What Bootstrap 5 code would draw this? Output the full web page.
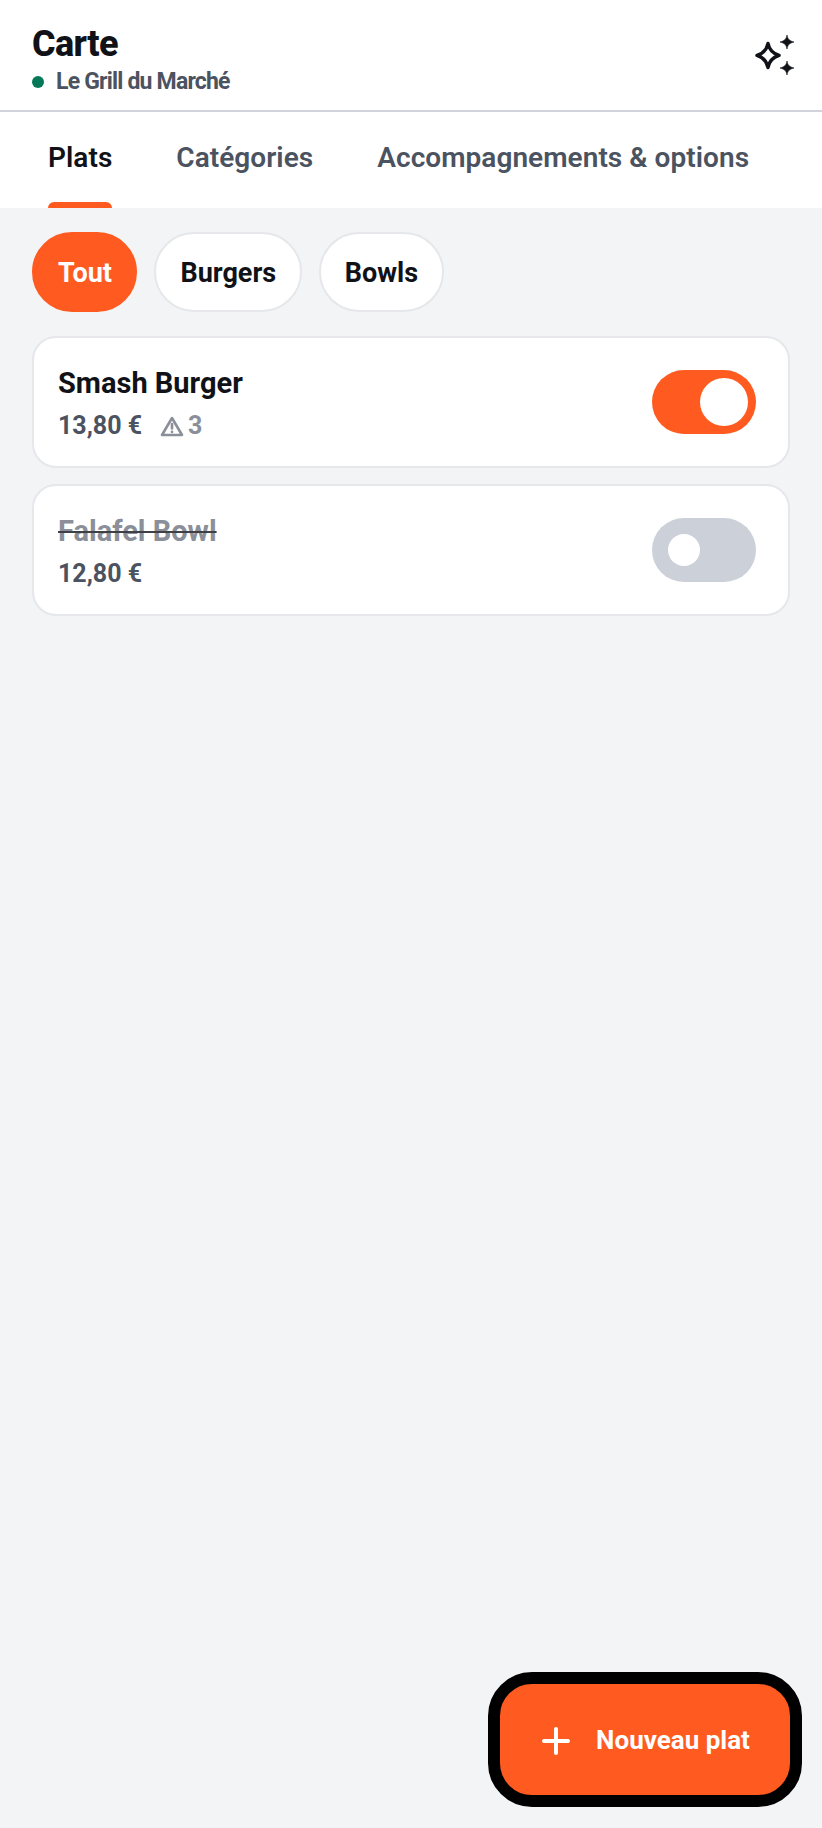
<!DOCTYPE html>
<html lang="fr">
<head>
  <meta charset="UTF-8" />
  <meta name="viewport" content="width=device-width, initial-scale=1.0"/>
  <title>Carte</title>
  <link href="https://cdn.jsdelivr.net/npm/bootstrap@5.3.0/dist/css/bootstrap.min.css" rel="stylesheet">
  <style>
    body { min-height:100vh; background:#f3f4f6; font-family:Roboto,"Liberation Sans",sans-serif; color:#111218; }
    .top-head { height:112px; padding:0 26px 0 32px; border-bottom:2px solid #d1d5db; }
    .head-text { padding-top:9px; }
    .page-title { font-size:36px; font-weight:800; line-height:42px; letter-spacing:-.6px; margin:0; }
    .resto-line { font-size:23px; font-weight:700; line-height:30px; color:#4b5260; letter-spacing:-.8px; gap:12px; margin-top:2px; }
    .live-dot { width:12px; height:12px; border-radius:50%; background:#047857; }
    .tab-strip { height:96px; padding:0 32px; gap:32px; }
    .tab-link { position:relative; padding:0 16px; font-size:28px; font-weight:600; line-height:92px; letter-spacing:.05px; color:#4b5260; white-space:nowrap; }
    .tab-link.on { color:#111218; }
    .tab-link.on::after { content:""; position:absolute; left:16px; right:16px; bottom:0; height:6px; background:#ff5a1f; border-radius:6px 6px 0 0; }
    .chip-row { padding:24px 32px; gap:17px; }
    .chip-item { height:80px; padding:1px 23.5px 0 24px; border:2px solid #e5e7eb; border-radius:40px; background:#fff; font-size:27px; font-weight:700; line-height:76px; }
    .chip-item.on { background:#ff5a1f; border-color:#ff5a1f; color:#fff; }
    .dish-list { padding:0 32px; gap:16px; }
    .dish-card { height:132px; padding:0 32px 0 24px; background:#fff; border:2px solid #e5e7eb; border-radius:24px; }
    .dish-text { padding-top:2px; }
    .dish-name { font-size:29px; font-weight:700; line-height:36px; }
    .dish-name.off { color:#8a8f99; text-decoration:line-through; text-decoration-color:#3f3f46; }
    .dish-price { font-size:25px; font-weight:700; line-height:32px; color:#4b5260; margin-top:9px; }
    .warn-count { font-size:25px; font-weight:700; color:#8a8f99; gap:4px; margin-left:18px; }
    .toggle-sw { width:104px; height:64px; border-radius:32px; background:#ff5a1f; padding:8px; }
    .toggle-sw.off { background:#cbd0d9; padding:16px; }
    .toggle-knob { width:48px; height:48px; border-radius:50%; background:#fff; }
    .toggle-sw.off .toggle-knob { width:32px; height:32px; }
    .add-btn { position:fixed; right:20px; bottom:21px; height:135px; width:314px; padding:8px 12px 6px 14px; border:12px solid #000; border-radius:44px; background:#ff5a1f; color:#fff; font-size:26px; font-weight:700; gap:26px; }
    .add-btn:hover, .add-btn:active { background:#ff5a1f !important; color:#fff !important; border-color:#000 !important; }
  </style>
</head>
<body>
  <header class="top-head d-flex align-items-center justify-content-between bg-white">
    <div class="head-text">
      <h1 class="page-title">Carte</h1>
      <div class="resto-line d-flex align-items-center"><span class="live-dot"></span>Le Grill du Marché</div>
    </div>
    <svg width="48" height="48" viewBox="0 -2 48 48" aria-hidden="true">
      <path d="M20 10.5 C21.2 16.8 24.5 20.3 31 22.4 C24.5 24.5 21.2 28 20 34.5 C18.8 28 15.5 24.5 9 22.4 C15.5 20.3 18.8 16.8 20 10.5 Z" fill="none" stroke="#111218" stroke-width="3.5" stroke-linejoin="round"/>
      <path d="M39 2 C39.8 6.2 41.2 7.8 46 9 C41.2 10.2 39.8 11.8 39 16 C38.2 11.8 36.8 10.2 32 9 C36.8 7.8 38.2 6.2 39 2 Z" fill="#111218" stroke="#111218" stroke-width=".6"/>
      <path d="M39 28 C39.8 32.2 41.2 33.8 46 35 C41.2 36.2 39.8 37.8 39 42 C38.2 37.8 36.8 36.2 32 35 C36.8 33.8 38.2 32.2 39 28 Z" fill="#111218" stroke="#111218" stroke-width=".6"/>
    </svg>
  </header>

  <nav class="tab-strip d-flex bg-white">
    <a class="tab-link on text-decoration-none" href="#">Plats</a>
    <a class="tab-link text-decoration-none" href="#">Catégories</a>
    <a class="tab-link text-decoration-none" href="#">Accompagnements &amp; options</a>
  </nav>

  <div class="chip-row d-flex">
    <div class="chip-item on">Tout</div>
    <div class="chip-item">Burgers</div>
    <div class="chip-item">Bowls</div>
  </div>

  <main class="dish-list d-flex flex-column">
    <div class="dish-card d-flex align-items-center justify-content-between">
      <div class="dish-text">
        <div class="dish-name">Smash Burger</div>
        <div class="dish-price d-flex align-items-center">13,80 €
          <span class="warn-count d-inline-flex align-items-center">
            <svg width="24" height="24" viewBox="0 0 24 24" fill="none" stroke="#8a8f99" stroke-width="2.6" stroke-linejoin="round" stroke-linecap="round" aria-hidden="true">
              <path d="M12 4 L22 21 H2 Z"/><path d="M12 10 V14.5"/><path d="M12 17.8 V18"/>
            </svg>3
          </span>
        </div>
      </div>
      <div class="toggle-sw d-flex justify-content-end"><div class="toggle-knob"></div></div>
    </div>
    <div class="dish-card d-flex align-items-center justify-content-between">
      <div class="dish-text">
        <div class="dish-name off">Falafel Bowl</div>
        <div class="dish-price">12,80 €</div>
      </div>
      <div class="toggle-sw off d-flex"><div class="toggle-knob"></div></div>
    </div>
  </main>

  <button class="add-btn btn d-flex align-items-center justify-content-center" type="button">
    <svg width="28" height="28" viewBox="0 0 28 28" stroke="#fff" stroke-width="4" stroke-linecap="round" aria-hidden="true"><path d="M14 2 V26"/><path d="M2 14 H26"/></svg>
    Nouveau plat
  </button>

  <script src="https://cdn.jsdelivr.net/npm/bootstrap@5.3.0/dist/js/bootstrap.bundle.min.js"></script>
</body>
</html>
